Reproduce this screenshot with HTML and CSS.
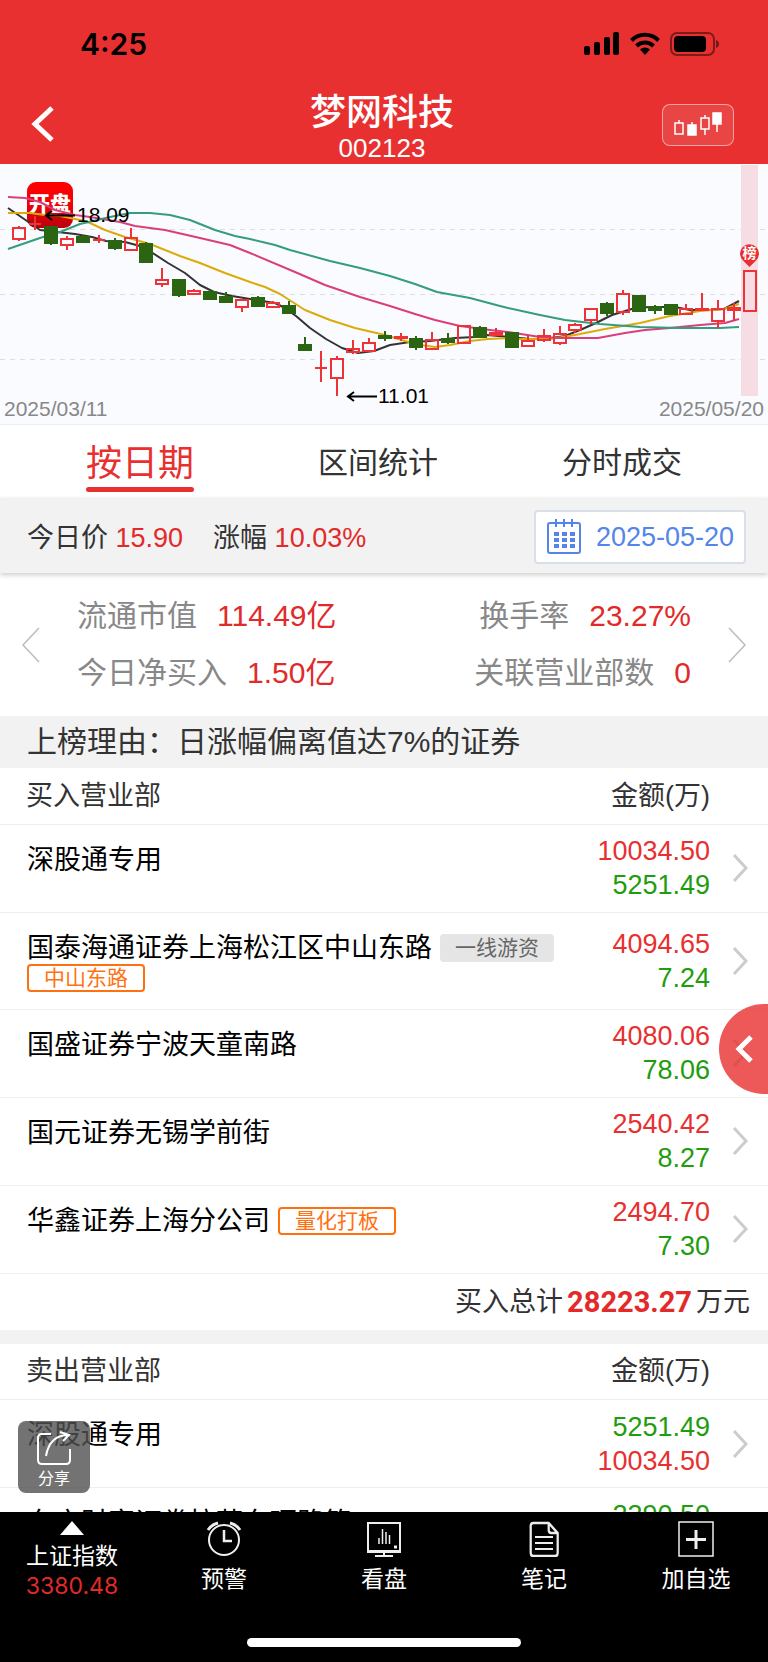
FILE: index.html
```html
<!DOCTYPE html>
<html lang="zh-CN">
<head>
    <meta charset="UTF-8">
    <meta name="viewport" content="width=device-width, initial-scale=1.0">
    <title>梦网科技 002123</title>
    <link rel="stylesheet" href="styles.css">
</head>
<body>
    <header class="header">
        <div class="status">
            <span class="clock">4:25</span>
            <div class="status-icons">
                <svg width="36" height="24" viewBox="0 0 36 24">
                    <rect x="0" y="14" width="6" height="9" rx="2"/>
                    <rect x="10" y="10" width="6" height="13" rx="2"/>
                    <rect x="20" y="5" width="6" height="18" rx="2"/>
                    <rect x="29" y="0" width="6" height="23" rx="2"/>
                </svg>
                <svg width="30" height="24" viewBox="0 0 30 24">
                    <g fill="none" stroke="#000" stroke-width="4">
                        <path d="M1.5 8.500a19 19 0 0 1 27 0"/>
                        <path d="M6.500 14a12 12 0 0 1 17 0"/>
                    </g>
                    <path d="M10 17.500a7.500 7.500 0 0 1 10 0L15 23z"/>
                </svg>
                <svg width="50" height="24" viewBox="0 0 50 24">
                    <rect x="1" y="1" width="43" height="22" rx="6" fill="none" stroke="#000" stroke-opacity=".45" stroke-width="2"/>
                    <rect x="4" y="4" width="32" height="16" rx="4"/>
                    <path d="M46 8q3 1 3 4t-3 4z" fill-opacity=".5"/>
                </svg>
            </div>
        </div>
        <div class="nav">
            <button class="back" aria-label="返回">
                <svg width="24" height="38" viewBox="0 0 24 38"><path d="M22 2L5 18l17 16" fill="none" stroke="#fff" stroke-width="5"/></svg>
            </button>
            <div class="title">
                <h1>梦网科技</h1>
                <p>002123</p>
            </div>
            <button class="kline" aria-label="K线">
                <svg width="48" height="26" viewBox="0 0 48 26" fill="none" stroke="#fff" stroke-width="1.500">
                    <path d="M1 11h8v11H1zM5 11V8M27 6h8v11h-8zM31 6V3M31 17v6"/>
                    <path d="M14 13h8v10h-8zM18 13v-3M39 1h8v11h-8zM43 12v8" fill="#fff"/>
                </svg>
            </button>
        </div>
    </header>

    <main class="content">
        <svg class="chart" viewBox="0 4 768 260">
            <defs>
                <linearGradient id="logo" x1="0" y1="0" x2="0" y2="1">
                    <stop offset="0" stop-color="#ff0000"/>
                    <stop offset=".5" stop-color="#f00006"/>
                    <stop offset="1" stop-color="#b80010"/>
                </linearGradient>
            </defs>
            <path class="grid" d="M0 69.500h768M0 134.500h768M0 199.500h768"/>
            <rect x="741" y="5" width="17" height="231" fill="#f6dde3"/>
            <rect x="27" y="22" width="46" height="46" rx="9" fill="url(#logo)"/>
            <text class="logo-text" x="50" y="51" text-anchor="middle">开盘</text>
            <g class="lines">
                <polyline stroke="#333" points="8,48 27,61 40,70 75,74 92,77 106,81 125,82 140,86 148,90 168,103 185,113 200,125 214,132 232,136 250,139 275,143 283,147 296,156 310,168 326,179 342,188 358,193 374,191 390,185 410,182 430,181 455,178 475,177 487,175 510,177 530,179 545,179 565,176 580,170 596,163 612,155 635,148 650,147 675,147 690,150 710,150 724,149 739,141"/>
                <polyline stroke="#dcab0a" points="8,53 30,53 45,55 60,56 80,60 90,63 105,70 125,77 150,84 180,96 200,103 225,113 250,122 265,127 280,134 305,150 330,160 355,168 385,175 405,181 420,185 435,187 450,185 470,181 488,179 510,178 520,179 550,179 575,175 605,169 640,163 670,156 700,151 724,149 739,144"/>
                <polyline stroke="#d93f7c" points="8,37 25,38 40,42 55,50 75,55 90,57 120,62 135,66 165,70 200,78 230,85 250,93 295,112 325,125 360,137 390,146 415,154 435,160 460,166 490,170 508,172 540,177 560,178 598,178 625,173 645,170 670,168 700,165 725,163 739,159"/>
                <polyline stroke="#359c7c" points="8,89 40,78 60,72 80,64 110,57 130,53 150,53 170,55 190,60 215,70 235,76 250,79 275,85 290,90 330,101 360,108 390,116 415,124 437,132 470,138 500,146 508,148 540,155 565,160 600,164 640,167 680,168 720,168 739,167"/>
            </g>
            <g id="candles"></g>
            <g fill="none" stroke="#000" stroke-width="2">
                <path d="M75 55.500H46M52 51l-6 4.500 6 4.500M377 236.500h-29M354 232l-6 4.500 6 4.500"/>
            </g>
            <text class="mark" x="77" y="62">18.09</text>
            <text class="mark" x="378" y="243">11.01</text>
            <path d="M749.500 107l-6-6a9.500 9.500 0 1 1 12 0z" fill="#e83030"/>
            <text class="pin" x="749.500" y="98" text-anchor="middle">榜</text>
            <text class="date" x="4" y="256">2025/03/11</text>
            <text class="date" x="764" y="256" text-anchor="end">2025/05/20</text>
        </svg>

        <nav class="tabs">
            <button class="tab active">按日期</button>
            <button class="tab">区间统计</button>
            <button class="tab">分时成交</button>
        </nav>

        <section class="price">
            <span>今日价 <b>15.90</b></span>
            <span>涨幅 <b>10.03%</b></span>
            <label class="date-box">
                <svg width="36" height="36" viewBox="0 0 36 36">
                    <path d="M4 4h28q2 0 2 2v26q0 2-2 2H4q-2 0-2-2V6q0-2 2-2zM10 0v8M18 0v8M26 0v8" fill="none" stroke="#5485ea" stroke-width="2"/>
                    <path d="M8 15h21M8 21h21M8 27h21" stroke="#5485ea" stroke-width="4" stroke-dasharray="5 3"/>
                </svg>
                <input type="text" value="2025-05-20" aria-label="日期" readonly>
            </label>
        </section>

        <section class="stats">
            <button class="arrow" aria-label="上一个"><svg width="18" height="36" viewBox="0 0 18 36"><path d="M17 1L1 18l16 17"/></svg></button>
            <dl>
                <div><dt>流通市值</dt><dd>114.49亿</dd></div>
                <div><dt>今日净买入</dt><dd>1.50亿</dd></div>
            </dl>
            <dl class="right">
                <div><dt>换手率</dt><dd>23.27%</dd></div>
                <div><dt>关联营业部数</dt><dd>0</dd></div>
            </dl>
            <button class="arrow" aria-label="下一个"><svg width="18" height="36" viewBox="0 0 18 36"><path d="M1 1l16 17L1 35"/></svg></button>
        </section>

        <h2 class="reason">上榜理由：日涨幅偏离值达7%的证券</h2>

        <table class="list">
            <thead>
                <tr><th>买入营业部</th><th class="amount">金额(万)</th><th class="go"></th></tr>
            </thead>
            <tbody>
                <tr>
                    <td><div class="name">深股通专用</div></td>
                    <td class="amount"><div class="red">10034.50</div><div class="green">5251.49</div></td>
                    <td class="go"><svg width="16" height="28" viewBox="0 0 16 28"><path d="M2 1l12 13L2 27"/></svg></td>
                </tr>
                <tr>
                    <td><div class="name">国泰海通证券上海松江区中山东路 <span class="tag gray">一线游资</span> <span class="tag">中山东路</span></div></td>
                    <td class="amount"><div class="red">4094.65</div><div class="green">7.24</div></td>
                    <td class="go"><svg width="16" height="28" viewBox="0 0 16 28"><path d="M2 1l12 13L2 27"/></svg></td>
                </tr>
                <tr>
                    <td><div class="name">国盛证券宁波天童南路</div></td>
                    <td class="amount"><div class="red">4080.06</div><div class="green">78.06</div></td>
                    <td class="go"><svg width="16" height="28" viewBox="0 0 16 28"><path d="M2 1l12 13L2 27"/></svg></td>
                </tr>
                <tr>
                    <td><div class="name">国元证券无锡学前街</div></td>
                    <td class="amount"><div class="red">2540.42</div><div class="green">8.27</div></td>
                    <td class="go"><svg width="16" height="28" viewBox="0 0 16 28"><path d="M2 1l12 13L2 27"/></svg></td>
                </tr>
                <tr>
                    <td><div class="name">华鑫证券上海分公司 <span class="tag">量化打板</span></div></td>
                    <td class="amount"><div class="red">2494.70</div><div class="green">7.30</div></td>
                    <td class="go"><svg width="16" height="28" viewBox="0 0 16 28"><path d="M2 1l12 13L2 27"/></svg></td>
                </tr>
            </tbody>
        </table>
        <p class="total">买入总计<strong>28223.27</strong>万元</p>

        <table class="list">
            <thead>
                <tr><th>卖出营业部</th><th class="amount">金额(万)</th><th class="go"></th></tr>
            </thead>
            <tbody>
                <tr>
                    <td><div class="name">深股通专用</div></td>
                    <td class="amount"><div class="green">5251.49</div><div class="red">10034.50</div></td>
                    <td class="go"><svg width="16" height="28" viewBox="0 0 16 28"><path d="M2 1l12 13L2 27"/></svg></td>
                </tr>
                <tr>
                    <td><div class="name">东方财富证券拉萨东环路第</div></td>
                    <td class="amount"><div class="green">2390.50</div><div class="red">&nbsp;</div></td>
                    <td class="go"><svg width="16" height="28" viewBox="0 0 16 28"><path d="M2 1l12 13L2 27"/></svg></td>
                </tr>
            </tbody>
        </table>
    </main>

    <button class="drawer" aria-label="展开">
        <svg width="18" height="28" viewBox="0 0 18 28"><path d="M16 2L4 14l12 12" fill="none" stroke="#fff" stroke-width="5"/></svg>
    </button>

    <button class="share">
        <svg width="36" height="36" viewBox="0 0 36 36" fill="none" stroke="#fff" stroke-width="2">
            <path d="M15 4H6q-4 0-4 4v22q0 4 4 4h24q4 0 4-4V19"/>
            <path d="M10 26C12 14 18 5 33 5M24 2l9 3-6 6"/>
        </svg>
        分享
    </button>

    <footer class="footer">
        <div class="menu">
            <a href="#" class="index">
                <svg width="24" height="14" viewBox="0 0 24 14"><path d="M12 0l12 14H0z" fill="#fff"/></svg>
                上证指数
                <em>3380.48</em>
            </a>
            <a href="#">
                <svg width="36" height="36" viewBox="0 0 36 36" fill="none" stroke="#eee" stroke-width="2">
                    <circle cx="18" cy="19" r="15"/>
                    <path d="M18 9v11h8" stroke-width="2.500"/>
                    <path d="M2 9q3-5 10-7M34 9q-3-5-10-7" stroke-width="3"/>
                </svg>
                预警
            </a>
            <a href="#">
                <svg width="36" height="36" viewBox="0 0 36 36" fill="none" stroke="#eee" stroke-width="2">
                    <path d="M2 2h32v28H2zM1 31h34M18 31v3M9 35h18" />
                    <path d="M13 23v-6M16.500 23V8M20 23V11M23.500 23v-9" stroke-width="1.500"/>
                    <path d="M28 26h3" stroke-width="3"/>
                </svg>
                看盘
            </a>
            <a href="#">
                <svg width="36" height="36" viewBox="0 0 36 36" fill="none" stroke="#eee" stroke-width="2.500">
                    <path d="M23 2H6q-3 0-3 3v27q0 3 3 3h24q3 0 3-3V12zM23 2v7q0 3 3 3h7" transform="translate(2 0) scale(.9 1)"/>
                    <path d="M9 16h18M9 22h18M9 28h18" stroke-width="1.800"/>
                </svg>
                笔记
            </a>
            <a href="#">
                <svg width="36" height="36" viewBox="0 0 36 36" fill="none" stroke="#eee">
                    <rect x="1" y="1" width="34" height="34" stroke-width="1.500"/>
                    <path d="M18 9v19M8 18.500h20" stroke-width="3"/>
                </svg>
                加自选
            </a>
        </div>
        <div class="home"></div>
    </footer>

    <script>
        // [x, high, body top, body bottom, low, up]
        const candles = [
            [19, 66, 68, 79, 81, 1], [35, 56, 64, 64, 70, 1], [51, 67, 67, 83, 85, 0], [67, 76, 79, 85, 90, 1],
            [83, 75, 77, 82, 82, 0], [99, 75, 80, 80, 83, 1], [115, 78, 81, 88, 90, 0], [131, 68, 78, 90, 91, 1],
            [146, 82, 84, 102, 103, 0], [162, 108, 120, 124, 127, 1], [179, 119, 120, 135, 137, 0], [194, 129, 131, 134, 135, 1],
            [210, 130, 132, 139, 139, 0], [226, 132, 137, 142, 142, 0], [242, 139, 140, 147, 152, 1], [258, 136, 138, 146, 147, 0],
            [273, 141, 143, 147, 148, 1], [289, 141, 146, 153, 154, 0], [305, 177, 185, 190, 190, 0], [321, 191, 208, 208, 222, 1],
            [337, 196, 199, 218, 236, 1], [353, 180, 189, 192, 194, 1], [369, 178, 183, 191, 192, 1], [385, 171, 176, 178, 181, 0],
            [401, 173, 177, 178, 181, 1], [416, 176, 179, 187, 190, 0], [432, 172, 180, 189, 190, 1], [448, 173, 179, 182, 184, 0],
            [464, 166, 166, 183, 183, 1], [480, 166, 168, 177, 177, 0], [496, 168, 173, 175, 175, 1], [512, 173, 173, 187, 188, 0],
            [528, 175, 181, 186, 186, 1], [544, 169, 176, 180, 182, 1], [560, 166, 174, 183, 185, 1], [575, 163, 165, 170, 173, 1],
            [591, 149, 149, 160, 164, 1], [607, 142, 144, 153, 156, 0], [623, 130, 134, 152, 155, 1], [639, 136, 136, 151, 151, 0],
            [655, 145, 147, 150, 154, 0], [671, 145, 145, 154, 155, 0], [686, 144, 149, 154, 155, 1], [702, 133, 149, 150, 150, 1],
            [718, 140, 149, 161, 168, 1], [734, 143, 148, 150, 161, 1], [750, 111, 111, 151, 151, 1]
        ];
        document.getElementById('candles').innerHTML = candles.map(([x, high, top, bottom, low, up]) =>
            `<path class="${up ? 'up' : 'down'}" d="M${x} ${high}V${top}M${x} ${bottom}V${low}M${x - 6} ${top}h12V${bottom}h-12z"/>`
        ).join('');
    </script>
</body>
</html>
```
FILE: styles.css
```css
* {
    box-sizing: border-box;
    margin: 0;
    padding: 0;
}
body {
    display: flex;
    flex-direction: column;
    height: 100vh;
    overflow: hidden;
    position: relative;
    background: #fff;
    color: #333;
    font-family: "Liberation Sans", "Noto Sans CJK SC", sans-serif;
    font-size: 27px;
}
button {
    border: none;
    background: none;
    font: inherit;
    color: inherit;
    cursor: pointer;
}
svg {
    display: block;
}
a {
    color: inherit;
    text-decoration: none;
}

/* 顶部 */
.header {
    flex: none;
    background: #e83030;
    color: #fff;
}
.status {
    display: flex;
    justify-content: space-between;
    align-items: center;
    height: 88px;
    padding: 0 48px 0 80px;
    color: #000;
}
.clock {
    font-family: Inter, sans-serif;
    font-size: 30px;
    font-weight: 600;
}
.status-icons {
    display: flex;
    gap: 10px;
}
.nav {
    display: flex;
    justify-content: space-between;
    align-items: center;
    height: 76px;
    padding: 0 34px 2px 30px;
}
.back {
    width: 72px;
}
.title {
    text-align: center;
}
.title h1 {
    font-size: 36px;
    font-weight: 500;
    line-height: 46px;
}
.title p {
    font-size: 26px;
    line-height: 24px;
}
.kline {
    display: flex;
    align-items: center;
    justify-content: center;
    width: 72px;
    height: 42px;
    border: 1px solid rgba(255, 255, 255, .5);
    border-radius: 8px;
    background: rgba(255, 255, 255, .1);
}

/* K线图 */
.content {
    flex: 1;
    min-height: 0;
    overflow-y: auto;
    scrollbar-width: none;
}
.chart {
    width: 100%;
    background: #fafbff;
    border-bottom: 1px solid #eceef2;
}
.grid {
    stroke: #dcdde2;
    stroke-width: 1;
    stroke-dasharray: 5 5;
}
.lines {
    fill: none;
    stroke-width: 2;
    stroke-linejoin: round;
}
.up {
    fill: none;
    stroke: #ee3338;
    stroke-width: 2;
}
.down {
    fill: #2c6512;
    stroke: #2c6512;
    stroke-width: 2;
}
.mark {
    font-size: 21px;
    fill: #000;
}
.date {
    font-size: 21px;
    fill: #888;
}
.pin {
    font-size: 14px;
    font-weight: 700;
    fill: #fff;
}
.logo-text {
    font-size: 21px;
    font-weight: 900;
    fill: #fff;
}

/* 标签 */
.tabs {
    display: flex;
    justify-content: space-between;
    height: 73px;
    padding: 0 86px;
}
.tab {
    height: 67px;
    padding-top: 3px;
    font-size: 30px;
}
.tab.active {
    font-size: 36px;
    color: #e83030;
    position: relative;
}
.tab.active::after {
    content: "";
    position: absolute;
    left: 0;
    right: 0;
    bottom: 0;
    height: 5px;
    border-radius: 3px;
    background: #e83030;
}
.price {
    display: flex;
    align-items: center;
    gap: 30px;
    height: 75px;
    padding: 0 22px 0 27px;
    background: #f2f2f2;
    box-shadow: 0 2px 5px rgba(0, 0, 0, .2);
}
.price b {
    font-weight: 400;
    color: #e22a2a;
}
.date-box {
    display: flex;
    align-items: center;
    justify-content: space-between;
    width: 212px;
    height: 54px;
    margin: 3px 0 0 auto;
    padding: 0 10px;
    border: 2px solid #d9dfe8;
    border-radius: 4px;
    background: #fff;
}
.date-box input {
    width: 140px;
    border: none;
    outline: none;
    font: inherit;
    color: #5485ea;
    text-align: right;
}

/* 统计 */
.stats {
    display: flex;
    align-items: center;
    height: 143px;
    padding: 0 22px;
    font-size: 30px;
}
.arrow svg {
    fill: none;
    stroke: #bbb;
    stroke-width: 1.5;
}
.stats dl {
    flex: 1;
    padding: 0 37px 1px;
}
.stats dl div {
    display: flex;
    gap: 20px;
    line-height: 57px;
}
.stats .right div {
    justify-content: flex-end;
}
.stats dt {
    color: #888;
}
.stats dd {
    color: #e22a2a;
}
.reason {
    padding: 0 27px;
    background: #f2f2f2;
    font-size: 30px;
    font-weight: 400;
    line-height: 52px;
}

/* 营业部列表 */
.list {
    width: 100%;
    border-collapse: collapse;
}
.list tr {
    border-bottom: 1px solid #eee;
}
.list th {
    height: 56px;
    padding-left: 26px;
    font-weight: 400;
    line-height: 34px;
    text-align: left;
}
.list td {
    height: 88px;
    padding-left: 27px;
}
.list td:first-child {
    vertical-align: top;
}
.name {
    display: flex;
    flex-wrap: wrap;
    column-gap: 8px;
    padding: 20px 0 16px;
    color: #000;
    line-height: 30px;
}
.tag {
    margin: 1px 0;
    padding: 0 15px;
    border: 2px solid #ff7110;
    border-radius: 4px;
    color: #ff7110;
    font-size: 21px;
    line-height: 24px;
}
.tag.gray {
    padding: 0 13px;
    border-color: #e5e5e5;
    background: #e5e5e5;
    color: #666;
}
.list .amount {
    width: 136px;
    padding: 0;
    text-align: right;
    line-height: 34px;
}
.list .go {
    width: 58px;
    padding: 0 0 0 22px;
}
.go svg {
    fill: none;
    stroke: #ccc;
    stroke-width: 3;
}
.red {
    color: #e83030;
}
.green {
    color: #1f9d0f;
}
.total {
    display: flex;
    justify-content: flex-end;
    gap: 4px;
    padding: 0 18px;
    border-bottom: 14px solid #f2f2f2;
    line-height: 56px;
}
.total strong {
    font-family: Roboto, sans-serif;
    font-size: 29px;
    font-weight: 700;
    color: #e22a2a;
}

/* 悬浮按钮 */
.drawer {
    position: absolute;
    right: 0;
    top: 1004px;
    width: 49px;
    height: 90px;
    padding-left: 16px;
    border-radius: 45px 0 0 45px;
    background: rgba(232, 48, 48, .8);
}
.share {
    position: absolute;
    left: 18px;
    bottom: 169px;
    display: flex;
    flex-direction: column;
    align-items: center;
    gap: 3px;
    width: 72px;
    height: 72px;
    padding-top: 9px;
    border-radius: 8px;
    background: rgba(80, 80, 80, .8);
    color: #fff;
    font-size: 16px;
    line-height: 20px;
}

/* 底部 */
.footer {
    flex: none;
    height: 150px;
    background: #000;
    color: #fff;
}
.menu {
    display: grid;
    grid-template-columns: 9fr 10fr 10fr 10fr 9fr;
    height: 126px;
    padding-top: 9px;
    font-size: 23px;
    line-height: 30px;
}
.menu a {
    display: flex;
    flex-direction: column;
    align-items: center;
    gap: 7px;
}
.menu .index {
    gap: 0;
}
.index svg {
    margin-bottom: 6px;
}
.index em {
    font-family: Inter, sans-serif;
    font-style: normal;
    color: #e22a2a;
}
.home {
    width: 274px;
    height: 9px;
    margin: 0 auto;
    border-radius: 5px;
    background: #fff;
}
```
